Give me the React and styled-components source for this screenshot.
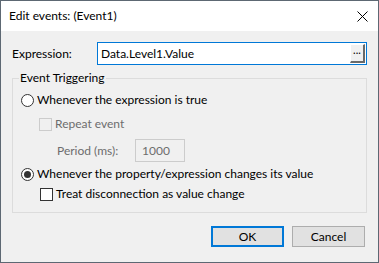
import React from "react";
import styled, { createGlobalStyle } from "styled-components";

const Global = createGlobalStyle`
  html, body { margin: 0; padding: 0; background: #ffffff; }
  * { box-sizing: border-box; }
  body { font-family: Lato, "Noto Sans", "Liberation Sans", sans-serif; font-size: 12px; color: #000; }
`;

const Window = styled.div`
  width: 379px;
  height: 263px;
  border: 1px solid #5d6873;
  display: flex;
  flex-direction: column;
  background: #f0f0f0;
`;

const TitleBar = styled.div`
  height: 30px;
  flex: none;
  background: #ffffff;
  display: flex;
  align-items: center;
  justify-content: space-between;
  padding: 0 10px 0 8px;
`;

const Title = styled.span`
  font-size: 12px;
  line-height: 16px;
  color: #000;
`;

const CloseIcon = () => (
  <svg width="11" height="11" viewBox="0 0 11 11" aria-hidden="true">
    <path d="M0.5 0.5 L10.5 10.5 M10.5 0.5 L0.5 10.5" stroke="#000" strokeWidth="1" fill="none" />
  </svg>
);

const Body = styled.div`
  flex: 1;
  display: flex;
  flex-direction: column;
  padding: 11px 11px 0 11px;
`;

const ExprRow = styled.div`
  display: flex;
  align-items: center;
  height: 23px;
`;

const Label = styled.span`
  width: ${(p) => p.$w || "auto"};
  flex: none;
  line-height: 16px;
  color: ${(p) => (p.$disabled ? "#6d6d6d" : "#000")};
`;

const ExprInput = styled.div`
  flex: 1;
  height: 23px;
  border: 1px solid #0078d7;
  background: #ffffff;
  display: flex;
  align-items: center;
  justify-content: space-between;
  padding: 0 1px 0 3px;
`;

const EllipsisButton = styled.div`
  width: 15px;
  height: 19px;
  background: #f0f0f0;
  border-top: 1px solid #ffffff;
  border-left: 1px solid #ffffff;
  border-right: 2px solid #696969;
  border-bottom: 2px solid #696969;
  display: flex;
  align-items: center;
  justify-content: center;
  font-size: 11px;
  line-height: 10px;
  padding-bottom: 6px;
`;

const Group = styled.fieldset`
  margin: 5px 0 0 0;
  border: 1px solid #dcdcdc;
  padding: 0 8px 10px 8px;
  min-width: 0;
  display: flex;
  flex-direction: column;
`;

const Legend = styled.legend`
  margin-left: -2px;
  padding: 0 1px;
  line-height: 16px;
  font-size: 12px;
`;

const OptionRow = styled.div`
  display: flex;
  align-items: center;
  height: ${(p) => p.$h || 16}px;
  margin-top: ${(p) => p.$mt || 0}px;
  padding-left: ${(p) => p.$indent || 0}px;
`;

const RadioCircle = styled.span`
  width: 13px;
  height: 13px;
  flex: none;
  border-radius: 50%;
  border: 1px solid #333333;
  background: #ffffff;
  display: flex;
  align-items: center;
  justify-content: center;
  margin-right: 3px;
  &::after {
    content: "";
    width: 7px;
    height: 7px;
    border-radius: 50%;
    background: ${(p) => (p.$checked ? "#333333" : "transparent")};
  }
`;

const CheckBox = styled.span`
  width: 13px;
  height: 13px;
  flex: none;
  border: 1px solid ${(p) => (p.$disabled ? "#cccccc" : "#333333")};
  background: ${(p) => (p.$disabled ? "#f0f0f0" : "#ffffff")};
  margin-right: 3px;
`;

const OptionText = styled.span`
  line-height: 16px;
  color: ${(p) => (p.$disabled ? "#6d6d6d" : "#000")};
  white-space: nowrap;
`;

const PeriodInput = styled.div`
  width: 50px;
  height: 23px;
  border: 1px solid #cccccc;
  background: #f0f0f0;
  color: #6d6d6d;
  display: flex;
  align-items: center;
  padding-left: 6px;
`;

const ButtonRow = styled.div`
  display: flex;
  justify-content: flex-end;
  gap: 8px;
  margin-top: 13px;
  padding-right: 2px;
`;

const Button = styled.div`
  width: 73px;
  height: 21px;
  background: #e1e1e1;
  border: ${(p) => (p.$default ? "2px solid #0078d7" : "1px solid #adadad")};
  display: flex;
  align-items: center;
  justify-content: center;
  line-height: 16px;
`;

export default function App() {
  return (
    <>
      <Global />
      <Window>
        <TitleBar>
          <Title>Edit events: (Event1)</Title>
          <CloseIcon />
        </TitleBar>
        <Body>
          <ExprRow>
            <Label $w="85px">Expression:</Label>
            <ExprInput>
              <span>Data.Level1.Value</span>
              <EllipsisButton>...</EllipsisButton>
            </ExprInput>
          </ExprRow>
          <Group>
            <Legend>Event Triggering</Legend>
            <OptionRow $mt={6}>
              <RadioCircle />
              <OptionText>Whenever the expression is true</OptionText>
            </OptionRow>
            <OptionRow $mt={8} $indent={18}>
              <CheckBox $disabled />
              <OptionText $disabled>Repeat event</OptionText>
            </OptionRow>
            <OptionRow $mt={7} $h={23} $indent={36}>
              <Label $w="78px" $disabled>Period (ms):</Label>
              <PeriodInput>1000</PeriodInput>
            </OptionRow>
            <OptionRow $mt={4}>
              <RadioCircle $checked />
              <OptionText>Whenever the property/expression changes its value</OptionText>
            </OptionRow>
            <OptionRow $mt={4} $indent={19}>
              <CheckBox />
              <OptionText>Treat disconnection as value change</OptionText>
            </OptionRow>
          </Group>
          <ButtonRow>
            <Button $default>OK</Button>
            <Button>Cancel</Button>
          </ButtonRow>
        </Body>
      </Window>
    </>
  );
}
